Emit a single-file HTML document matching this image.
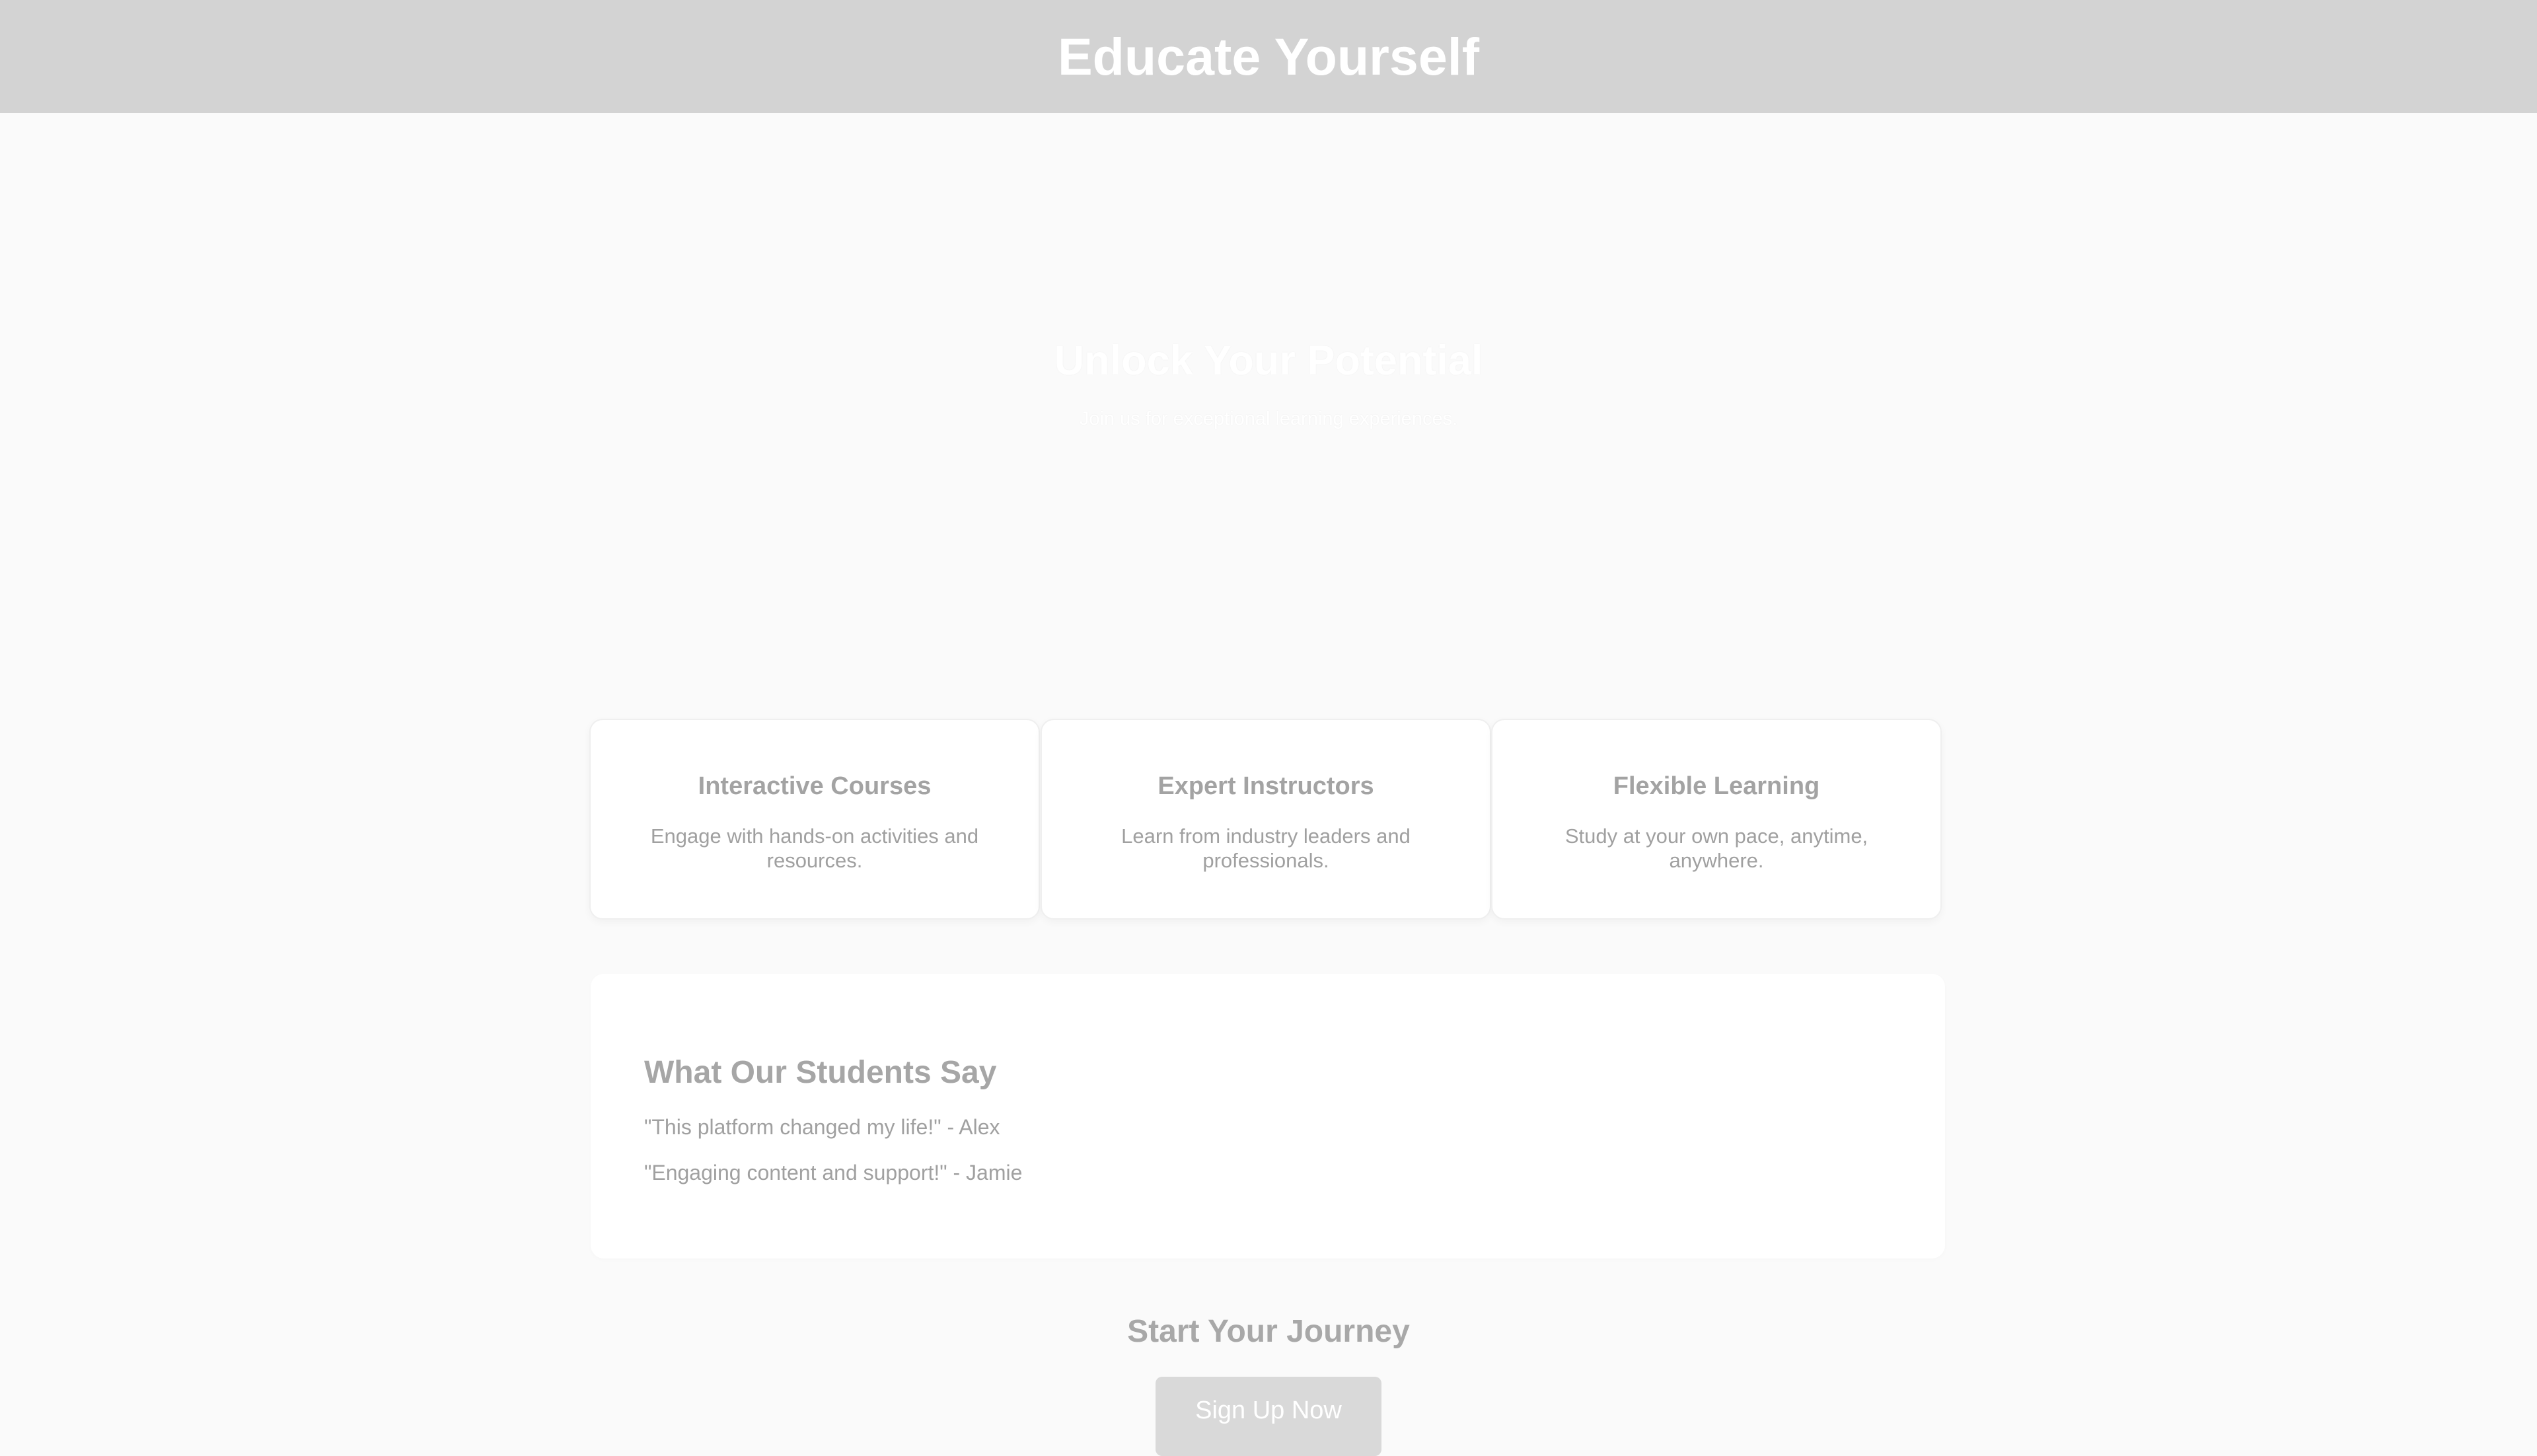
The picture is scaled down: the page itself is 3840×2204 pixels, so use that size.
<!DOCTYPE html>
<html><head><meta charset="utf-8"><style>
*{margin:0;padding:0;box-sizing:border-box}
html,body{width:3840px;height:2160px;overflow:hidden;background:#fafafa;font-family:"Liberation Sans",Arial,sans-serif}
.hdr{position:absolute;left:0;top:0;width:3840px;height:171px;background:#d3d3d3;text-align:center}
.hdr h1{color:#fff;font-size:79px;font-weight:bold;line-height:171px}
.c{position:absolute;left:0;width:3840px;text-align:center}
.card{position:absolute;top:1088px;height:304px;width:682px;background:#fff;border:2px solid #efefef;border-radius:20px;box-shadow:0 4px 12px rgba(0,0,0,0.04);text-align:center}
.t{position:absolute;left:0;right:0;top:78px;font-size:38px;font-weight:bold;color:#a3a3a3;line-height:44px}
.d{position:absolute;left:50px;right:50px;top:157px;font-size:31px;color:#a0a0a0;line-height:37px}
.box{position:absolute;left:894px;top:1474px;width:2050px;height:431px;background:#fff;border-radius:20px;box-shadow:0 2px 8px rgba(0,0,0,0.02)}
.box h2{position:absolute;left:81px;top:122px;font-size:48px;color:#a6a6a6;font-weight:bold;line-height:56px}
.box p{position:absolute;left:81px;font-size:32px;color:#a0a0a0;line-height:36px}
.btn{position:absolute;left:1749px;top:2084px;width:342px;height:120px;background:#d9d9d9;border-radius:10px;color:#fff;font-size:38px;text-align:center;padding-top:30px}
</style></head><body>
<div class="hdr"><h1>Educate Yourself</h1></div>
<div class="c" style="top:510px;font-size:63px;font-weight:bold;color:#fff;line-height:72px;text-shadow:0 0 2px rgba(0,0,0,0.05)">Unlock Your Potential</div>
<div class="c" style="top:616px;font-size:29px;color:#fff;line-height:36px;text-shadow:0 0 2px rgba(0,0,0,0.05)">Join us for exceptional learning experiences.</div>
<div class="card" style="left:892px"><div class="t">Interactive Courses</div><div class="d">Engage with hands-on activities and resources.</div></div>
<div class="card" style="left:1575px"><div class="t">Expert Instructors</div><div class="d">Learn from industry leaders and professionals.</div></div>
<div class="card" style="left:2257px"><div class="t">Flexible Learning</div><div class="d">Study at your own pace, anytime, anywhere.</div></div>
<div class="box"><h2>What Our Students Say</h2>
<p style="top:214px">"This platform changed my life!" - Alex</p>
<p style="top:283px">"Engaging content and support!" - Jamie</p></div>
<div class="c" style="top:1988px;font-size:48px;font-weight:bold;color:#a8a8a8;line-height:56px">Start Your Journey</div>
<div class="btn">Sign Up Now</div>
</body></html>
